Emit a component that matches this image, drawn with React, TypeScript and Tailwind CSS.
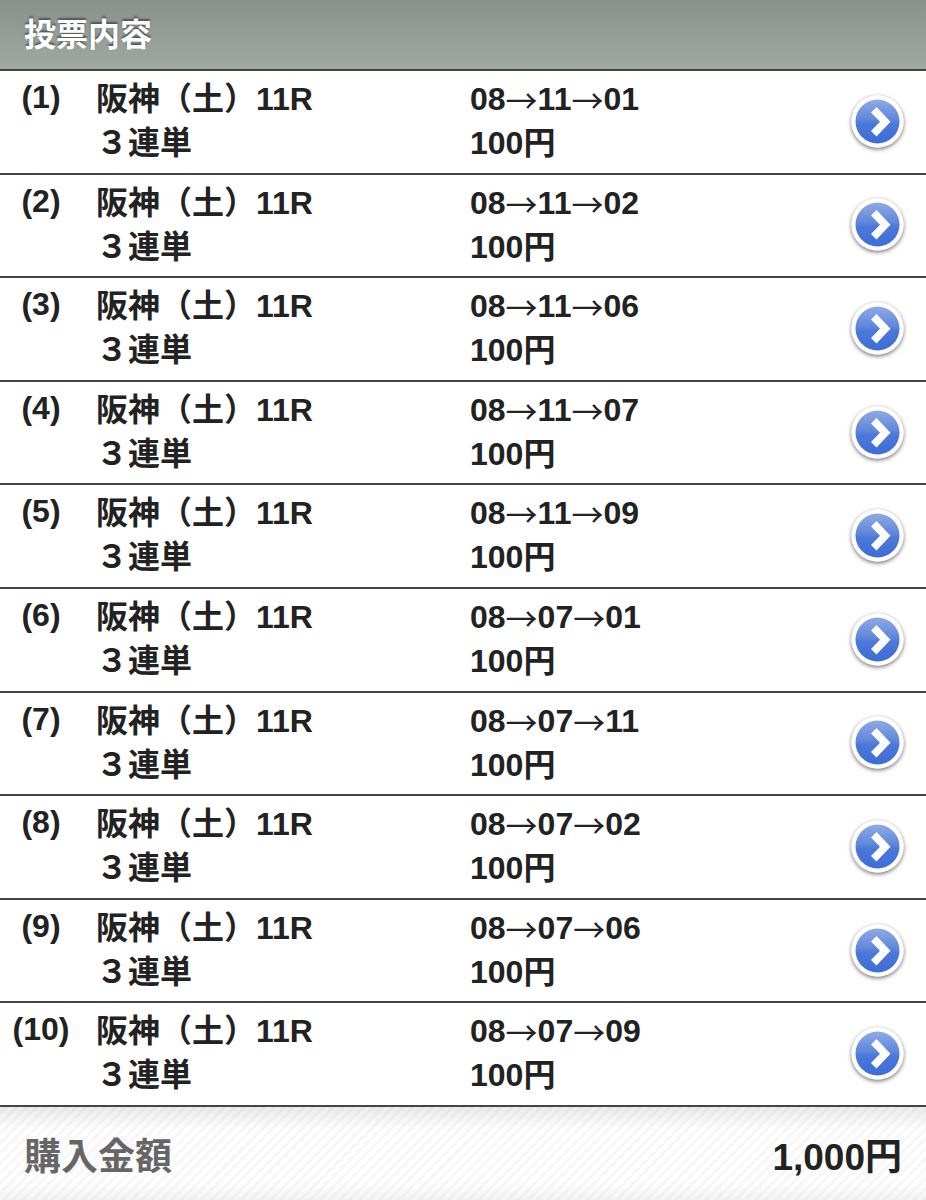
interface Bet {
  id: number;
  race: string;
  type: string;
  horses: string[];
  amount: string;
}

const combos = [
  ['08', '11', '01'],
  ['08', '11', '02'],
  ['08', '11', '06'],
  ['08', '11', '07'],
  ['08', '11', '09'],
  ['08', '07', '01'],
  ['08', '07', '11'],
  ['08', '07', '02'],
  ['08', '07', '06'],
  ['08', '07', '09'],
];

const bets: Bet[] = combos.map((horses, index) => ({
  id: index + 1,
  race: '阪神（土）11R',
  type: '３連単',
  horses,
  amount: '100円',
}));

function ArrowIcon() {
  return (
    <svg viewBox="0 0 64 64" className="size-16" aria-hidden="true">
      <defs>
        <linearGradient id="disc" x1="0" y1="0" x2="0" y2="1">
          <stop offset="0" stopColor="#8fabe6" />
          <stop offset="0.45" stopColor="#5f87dc" />
          <stop offset="0.55" stopColor="#4c78d8" />
          <stop offset="1" stopColor="#3c6cd8" />
        </linearGradient>
        <filter id="discShadow" x="-20%" y="-20%" width="140%" height="140%">
          <feDropShadow dx="0" dy="1.5" stdDeviation="2" floodColor="#000" floodOpacity="0.6" />
        </filter>
      </defs>
      <circle cx="31.5" cy="31.5" r="26" fill="#fff" filter="url(#discShadow)" />
      <circle cx="31.5" cy="31.5" r="22" fill="url(#disc)" />
      <path d="M30.5 17 L44.5 31.8 L30.5 46.5 L25 41 L34 31.8 L25 22.5 Z" fill="#fff" />
    </svg>
  );
}

function BetRow({ bet }: { bet: Bet }) {
  return (
    <li className="flex items-stretch border-b-2 border-[#444] bg-white">
      <div className="w-[82px] shrink-0 pt-1 text-center">({bet.id})</div>
      <div className="flex flex-1 pt-1.5 pl-3.5">
        <div className="w-[374px]">
          <p>{bet.race}</p>
          <p>{bet.type}</p>
        </div>
        <div className="flex-1">
          <p>
            {bet.horses.map((horse, index) => (
              <span key={index}>
                {index > 0 && (
                  <span className="align-[-3px] font-['Noto_Sans_CJK_JP',sans-serif] leading-none font-normal">→</span>
                )}
                {horse}
              </span>
            ))}
          </p>
          <p>{bet.amount}</p>
        </div>
      </div>
      <button type="button" aria-label={`(${bet.id}) 詳細`} className="mr-4 cursor-pointer self-center">
        <ArrowIcon />
      </button>
    </li>
  );
}

export default function App() {
  return (
    <div className="flex min-h-screen flex-col bg-white font-['Liberation_Sans','Noto_Sans_CJK_JP',sans-serif] text-[32px] leading-[44px] font-bold text-[#222]">
      {/* Header */}
      <header className="flex h-[71px] items-center border-b-2 border-[#444] bg-linear-to-b from-[#8a918b] to-[#a0a8a2] px-6">
        <h1 className="text-white [text-shadow:0_-2px_2px_rgba(0,0,0,0.45)]">投票内容</h1>
      </header>

      {/* Bets */}
      <ol className="grid flex-1 auto-rows-fr">
        {bets.map((bet) => (
          <BetRow key={bet.id} bet={bet} />
        ))}
      </ol>

      {/* Total */}
      <footer className="flex h-[93px] items-center justify-between bg-[linear-gradient(to_bottom,rgba(0,0,0,0.08),transparent_25%,transparent_80%,rgba(0,0,0,0.04)),repeating-linear-gradient(135deg,#fff_0px,#fdfdfd_3px,#f5f5f5_5px,#fdfdfd_7px)] px-6 pt-2 text-[37px]">
        <span className="text-[#666]">購入金額</span>
        <span>1,000円</span>
      </footer>
    </div>
  );
}
